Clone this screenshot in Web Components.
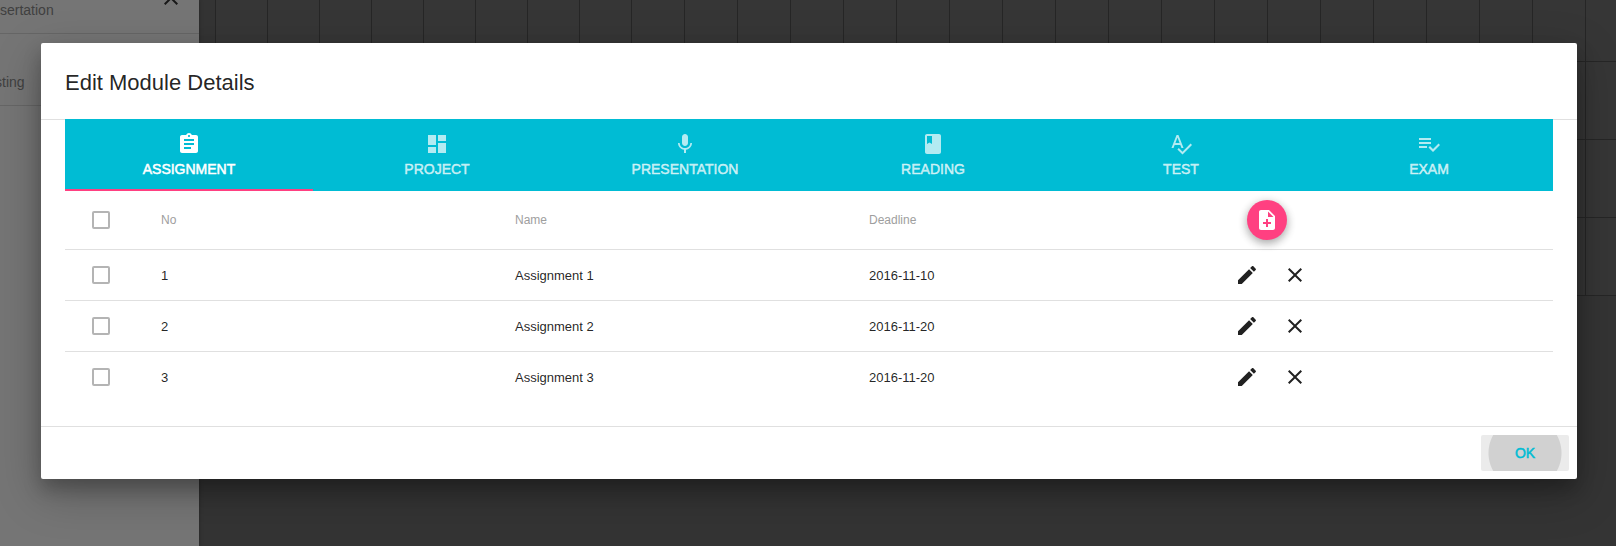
<!DOCTYPE html>
<html lang="en">
<head>
<meta charset="utf-8">
<title>Edit Module Details</title>
<style>
html, body { height: 100%; margin: 0; }
body { font-family: "Liberation Sans", Arial, sans-serif; color: rgba(0,0,0,.87); overflow: hidden; }
</style>
</head>
<body>
<module-app></module-app>
<script>
const ICONS = {
  assignment: 'M19 3h-4.18C14.4 1.84 13.3 1 12 1c-1.3 0-2.4.84-2.82 2H5c-1.1 0-2 .9-2 2v14c0 1.1.9 2 2 2h14c1.1 0 2-.9 2-2V5c0-1.1-.9-2-2-2zm-7 0c.55 0 1 .45 1 1s-.45 1-1 1-1-.45-1-1 .45-1 1-1zm2 14H7v-2h7v2zm3-4H7v-2h10v2zm0-4H7V7h10v2z',
  dashboard: 'M3 13h8V3H3v10zm0 8h8v-6H3v6zm10 0h8V11h-8v10zm0-18v6h8V3h-8z',
  mic: 'M12 14c1.66 0 2.99-1.34 2.99-3L15 5c0-1.66-1.34-3-3-3S9 3.34 9 5v6c0 1.66 1.34 3 3 3zm5.3-3c0 3-2.54 5.1-5.3 5.1S6.7 14 6.7 11H5c0 3.41 2.72 6.23 6 6.72V21h2v-3.28c3.28-.48 6-3.3 6-6.72h-1.7z',
  book: 'M18 2H6c-1.1 0-2 .9-2 2v16c0 1.1.9 2 2 2h12c1.1 0 2-.9 2-2V4c0-1.1-.9-2-2-2zM6 4h5v8l-2.5-1.5L6 12V4z',
  spellcheck: 'M12.45 16h2.09L9.43 3H7.57L2.46 16h2.09l1.12-3h5.64l1.14 3zm-6.02-5L8.5 5.48 10.57 11H6.43zm15.16.59l-8.09 8.09L9.83 16l-1.41 1.41 5.09 5.09L23 13l-1.41-1.41z',
  playlist: 'M14 10H2v2h12v-2zm0-4H2v2h12V6zM2 16h8v-2H2v2zm19.5-4.5L23 13l-6.99 7-4.51-4.5L13 14l3.01 3 5.49-5.5z',
  noteAdd: 'M14 2H6c-1.1 0-1.99.9-1.99 2L4 20c0 1.1.89 2 1.99 2H18c1.1 0 2-.9 2-2V8l-6-6zm2 14h-3v3h-2v-3H8v-2h3v-3h2v3h3v2zm-3-7V3.5L18.5 9H13z',
  edit: 'M3 17.25V21h3.75L17.81 9.94l-3.75-3.75L3 17.25zM20.71 7.04c.39-.39.39-1.02 0-1.41l-2.34-2.34c-.39-.39-1.02-.39-1.41 0l-1.83 1.83 3.75 3.75 1.83-1.83z',
  close: 'M19 6.41L17.59 5 12 10.59 6.41 5 5 6.41 10.59 12 5 17.59 6.41 19 12 13.41 17.59 19 19 17.59 13.41 12z'
};

function define(name, html, setup) {
  const template = document.createElement('template');
  template.innerHTML = html;
  customElements.define(name, class extends HTMLElement {
    constructor() {
      super();
      this.attachShadow({ mode: 'open' }).append(template.content.cloneNode(true));
    }
    connectedCallback() {
      if (setup && !this.ready) setup(this, this.shadowRoot);
      this.ready = true;
    }
  });
}

define('md-icon', `
<style>
:host { display: block; width: 24px; height: 24px; }
svg { display: block; width: 100%; height: 100%; fill: currentColor; }
</style>
<svg viewBox="0 0 24 24" aria-hidden="true"><path/></svg>`,
(el, root) => root.querySelector('path').setAttribute('d', ICONS[el.getAttribute('name')]));

define('icon-button', `
<style>
:host { display: block; }
button { display: block; box-sizing: border-box; width: 48px; height: 48px; padding: 12px; border: 0; background: none; color: inherit; }
:host([raised]) button { width: 40px; height: 40px; padding: 8px; border-radius: 50%; background: #ff4081; color: #fff;
  box-shadow: 0 3px 10px rgba(0,0,0,.16), 0 3px 10px rgba(0,0,0,.23); }
</style>
<button type="button"><slot></slot></button>`,
(el, root) => root.querySelector('button').setAttribute('aria-label', el.getAttribute('label')));

define('check-box', `
<style>
:host { display: block; height: 18px; }
input { appearance: none; display: block; box-sizing: border-box; width: 18px; height: 18px; margin: 0; border: 2px solid #b4b4b4; border-radius: 2px; }
</style>
<input type="checkbox">`,
(el, root) => root.querySelector('input').setAttribute('aria-label', el.getAttribute('label')));

define('tab-item', `
<style>
:host { display: block; flex: 1; min-width: 0; }
button { display: flex; flex-direction: column; align-items: center; gap: 3px;
  box-sizing: border-box; width: 100%; height: 72px; padding: 13px 0 0; border: 0; border-bottom: 2px solid transparent;
  background: none; color: rgba(255,255,255,.7); font: 500 14px/20px "Liberation Sans", Arial, sans-serif; text-transform: uppercase;
  -webkit-text-stroke: .5px currentColor; }
:host([selected]) button { color: #fff; border-bottom-color: #ff4081; }
</style>
<button type="button" role="tab"><md-icon></md-icon><slot></slot></button>`,
(el, root) => {
  root.querySelector('md-icon').replaceWith(icon(el.getAttribute('icon')));
  root.querySelector('button').setAttribute('aria-selected', el.hasAttribute('selected'));
});

function icon(name) {
  const node = document.createElement('md-icon');
  node.setAttribute('name', name);
  return node;
}

define('tab-bar', `
<style>:host { display: flex; background: #00bcd4; }</style>
<slot></slot>`);

define('assignment-table', `
<style>
:host { display: block; }
table { width: 100%; table-layout: fixed; border-collapse: separate; border-spacing: 0; }
th, td { box-sizing: border-box; padding: 0 24px; text-align: left; font-size: 13px; font-weight: 400; border-bottom: 1px solid #e0e0e0; }
th { height: 59px; font-size: 12px; color: #9e9e9e; }
td { height: 51px; }
tbody tr:last-child td { height: 50px; border-bottom: 0; }
th:first-child, td:first-child { width: 72px; padding: 0 0 0 27px; }
th icon-button { margin-left: 24px; }
.actions { display: flex; }
</style>
<table>
<thead><tr><th><check-box label="Select all"></check-box></th><th>No</th><th>Name</th><th>Deadline</th>
<th><icon-button raised label="Add"><md-icon name="noteAdd"></md-icon></icon-button></th></tr></thead>
<tbody></tbody>
</table>`,
(el, root) => {
  const rows = [['1', 'Assignment 1', '2016-11-10'], ['2', 'Assignment 2', '2016-11-20'], ['3', 'Assignment 3', '2016-11-20']];
  root.querySelector('tbody').innerHTML = rows.map(([no, name, date]) => `<tr>
<td><check-box label="Select ${name}"></check-box></td><td>${no}</td><td>${name}</td><td>${date}</td>
<td><div class="actions"><icon-button label="Edit"><md-icon name="edit"></md-icon></icon-button><icon-button label="Delete"><md-icon name="close"></md-icon></icon-button></div></td></tr>`).join('');
});

define('flat-button', `
<style>
:host { display: block; }
button { display: block; min-width: 88px; height: 36px; padding: 0 16px; border: 0; border-radius: 2px; color: #00bcd4;
  background: radial-gradient(circle 37px, #d1d1d1 36px, #ebebeb 37px);
  font: 500 14px/36px "Liberation Sans", Arial, sans-serif; -webkit-text-stroke: .5px currentColor; }
</style>
<button type="button"><slot></slot></button>`);

define('modal-dialog', `
<style>
:host { display: block; background: #fff; border-radius: 2px; box-shadow: 0 14px 45px rgba(0,0,0,.25), 0 10px 18px rgba(0,0,0,.22); }
h3 { margin: 0; padding: 24px 24px 20px; font-size: 22px; line-height: 32px; font-weight: 400; }
.body { padding: 0 24px 24px; background: linear-gradient(#e0e0e0, #e0e0e0) top / 100% 1px no-repeat; }
footer { display: flex; justify-content: flex-end; padding: 8px; border-top: 1px solid #e0e0e0; }
</style>
<section role="dialog" aria-labelledby="title">
<h3 id="title"><slot name="title"></slot></h3>
<div class="body"><slot></slot></div>
<footer><slot name="actions"></slot></footer>
</section>`);

define('side-item', `
<style>
:host { display: flex; box-sizing: border-box; height: 72px; justify-content: space-between; border-bottom: 1px solid #666; }
:host([long]) .text { margin-left: -5px; }
.text { padding-top: 38px; font-size: 14px; line-height: 20px; color: #404040; white-space: nowrap; }
.end { padding: 24px 16px 0 0; color: #181818; }
</style>
<span class="text"><slot></slot></span><span class="end"><slot name="end"></slot></span>`);

define('module-list', `
<style>
:host { display: block; background: #757575; box-shadow: 0 0 4px rgba(0,0,0,.3); z-index: 1; overflow: hidden; }
.items { margin-top: -38px; }
</style>
<div class="items">
<side-item>sertation<md-icon slot="end" name="close"></md-icon></side-item>
<side-item long>sting</side-item>
</div>`);

define('time-grid', `
<style>
:host { display: block; background: #343434; padding-left: 16px; overflow: hidden; }
.grid { display: grid; grid-template-columns: repeat(8, 52fr) repeat(19, 53fr); margin: -16px -22px 0 0; background: #363636; }
.grid i { height: 77px; border: solid #262626; border-width: 0 0 1px 1px; }
</style>
<div class="grid"></div>`,
(el, root) => { root.querySelector('.grid').innerHTML = '<i></i>'.repeat(27 * 4); });

define('module-app', `
<style>
:host { display: grid; grid-template: 100vh / 100%; }
.page, .overlay { grid-area: 1 / 1; }
.page { display: grid; grid-template-columns: 199px 1fr; min-width: 0; }
.overlay { z-index: 2; padding: 43px 39px 0 41px; }
</style>
<div class="page"><module-list></module-list><time-grid></time-grid></div>
<div class="overlay">
<modal-dialog>
<span slot="title">Edit Module Details</span>
<tab-bar role="tablist">
<tab-item icon="assignment" selected>Assignment</tab-item>
<tab-item icon="dashboard">Project</tab-item>
<tab-item icon="mic">Presentation</tab-item>
<tab-item icon="book">Reading</tab-item>
<tab-item icon="spellcheck">Test</tab-item>
<tab-item icon="playlist">Exam</tab-item>
</tab-bar>
<assignment-table></assignment-table>
<flat-button slot="actions">OK</flat-button>
</modal-dialog>
</div>`);
</script>
</body>
</html>
